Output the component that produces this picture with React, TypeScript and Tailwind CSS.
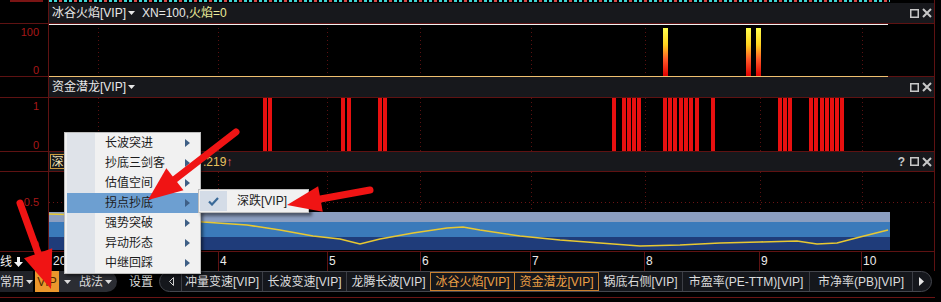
import React from "react";

// grid x positions, local to the chart area (page x - 49)
const GRID = [49, 169, 278, 371, 482, 596, 711, 813];

const FIRE_BARS = [614, 697, 707];

const RED_BARS = [
  263, 268, 341, 347, 378, 383, 612, 622, 627, 632, 637, 663, 668, 673, 679, 684, 689, 695, 711, 778,
  783, 788, 809, 814, 820, 825, 830, 835, 840,
];

const WAVE =
  "0,42 31,43 71,44 111,46 154,50 198,53 231,58 264,64 291,67 311,72 331,67 364,61 398,56 414,55 431,58 471,64 511,68 551,71 591,74 631,73 671,71 711,70 748,69 768,72 788,71 811,65 839,58";

const MENU = ["长波突进", "抄底三剑客", "估值空间", "拐点抄底", "强势突破", "异动形态", "中继回踩"];

const XLABELS = [
  { x: 4, t: "2024" },
  { x: 171, t: "4" },
  { x: 280, t: "5" },
  { x: 373, t: "6" },
  { x: 483, t: "7" },
  { x: 597, t: "8" },
  { x: 712, t: "9" },
  { x: 814, t: "10" },
];

const Caret = ({ color = "#e6e6e6" }: { color?: string }) => (
  <svg width="7" height="4" className="ml-[2px]">
    <path d="M0 0h7L3.5 4z" fill={color} />
  </svg>
);

function WinIcons({ help = false }: { help?: boolean }) {
  return (
    <div className="flex items-center gap-[3px]">
      {help && <span className="mr-[2px] text-[12px] font-bold text-[#c8c8c8]">?</span>}
      <svg width="9" height="9">
        <rect x="0.75" y="0.75" width="7.5" height="7.5" fill="none" stroke="#c8c8c8" strokeWidth="1.5" />
      </svg>
      <svg width="10" height="10">
        <path d="M1 1L9 9M9 1L1 9" stroke="#c8c8c8" strokeWidth="2" />
      </svg>
    </div>
  );
}

function Grid({ h }: { h: number }) {
  return (
    <>
      {GRID.map((x) => (
        <line key={x} x1={x + 0.5} x2={x + 0.5} y1="0" y2={h} stroke="#5a1111" strokeDasharray="1 3" />
      ))}
    </>
  );
}

const Arrow = ({ tail, tip, len, half }: { tail: [number, number]; tip: [number, number]; len: number; half: number }) => {
  const dx = tip[0] - tail[0];
  const dy = tip[1] - tail[1];
  const d = Math.hypot(dx, dy);
  const ux = dx / d;
  const uy = dy / d;
  const bx = tip[0] - ux * len;
  const by = tip[1] - uy * len;
  const px = -uy * half;
  const py = ux * half;
  return (
    <g>
      <line x1={tail[0]} y1={tail[1]} x2={bx} y2={by} stroke="#f01414" strokeWidth="7" strokeLinecap="round" />
      <polygon points={`${tip[0]},${tip[1]} ${bx + px},${by + py} ${bx - px},${by - py}`} fill="#f01414" />
    </g>
  );
};

export default function App() {
  return (
    <div className="relative h-[302px] w-[941px] overflow-hidden bg-black font-['Liberation_Sans','Noto_Sans_CJK_SC',sans-serif] text-[12px] leading-none">
      {/* chart panels */}
      <div className="w-[935px] border-r border-[#5e1212]">
        {/* strip left from the panel above */}
        <div className="flex h-[3px]">
          <div className="w-[49px] shrink-0 border-r border-[#5e1212]">
            <div className="ml-[10px] h-[2px] w-[33px] bg-[#7a1414]" />
          </div>
          <div className="h-[2px] w-[841px] bg-[repeating-linear-gradient(90deg,#3fd4d4_0_3px,transparent_3px_5px,#3fd4d4_5px_8px,transparent_8px_10px,#d64a4a_10px_13px,transparent_13px_15px)]" />
        </div>

        {/* 冰谷火焰 */}
        <div className="flex h-[21px]">
          <div className="w-[49px] shrink-0 border-r border-b border-[#5e1212]" />
          <div className="flex flex-1 items-center justify-between border-b border-[#5e1212] bg-[#17181c] pl-[3px] pr-[2px]">
            <div className="flex items-center text-[#e8e8e8]">
              <span>冰谷火焰[VIP]</span>
              <Caret />
              <span className="ml-[7px]">XN=100,</span>
              <span className="text-[#ecec9a]">火焰=0</span>
            </div>
            <WinIcons />
          </div>
        </div>
        <div className="flex h-[53px]">
          <div className="flex w-[49px] shrink-0 flex-col items-end justify-between border-r border-b border-[#5e1212] pr-[9px] pt-[3px] text-[11px] leading-[11px] text-[#a81818]">
            <span>100</span>
            <span>0</span>
          </div>
          <svg width="885" height="53" className="block">
            <defs>
              <linearGradient id="fire" x1="0" y1="0" x2="0" y2="1">
                <stop offset="0" stopColor="#ffff50" />
                <stop offset="0.35" stopColor="#ffd21e" />
                <stop offset="0.65" stopColor="#ff5a28" />
                <stop offset="1" stopColor="#e00000" />
              </linearGradient>
            </defs>
            <Grid h={53} />
            <line x1="0" x2="839" y1="0.5" y2="0.5" stroke="#f2f2f2" />
            <line x1="0" x2="839" y1="52.5" y2="52.5" stroke="#f0c070" />
            <line x1="839" x2="885" y1="52.5" y2="52.5" stroke="#5e1212" />
            {FIRE_BARS.map((x) => (
              <rect key={x} x={x} y="4" width="5" height="48" fill="url(#fire)" />
            ))}
          </svg>
        </div>

        {/* 资金潜龙 */}
        <div className="flex h-[21px]">
          <div className="w-[49px] shrink-0 border-r border-b border-[#5e1212]" />
          <div className="flex flex-1 items-center justify-between border-b border-[#5e1212] bg-[#17181c] pl-[3px] pr-[2px]">
            <div className="flex items-center text-[#e8e8e8]">
              <span>资金潜龙[VIP]</span>
              <Caret />
            </div>
            <WinIcons />
          </div>
        </div>
        <div className="flex h-[54px] border-b border-[#5e1212]">
          <div className="flex w-[49px] shrink-0 flex-col items-end justify-between border-r border-[#5e1212] pr-[9px] pt-[3px] text-[11px] leading-[11px] text-[#a81818]">
            <span>1</span>
            <span>0</span>
          </div>
          <svg width="885" height="53" className="block">
            <Grid h={53} />
            {RED_BARS.map((x) => (
              <rect key={x} x={x - 49} y="0" width="4" height="53" fill="#e81010" />
            ))}
          </svg>
        </div>

        {/* 深跌 */}
        <div className="flex h-[20px]">
          <div className="w-[49px] shrink-0 border-r border-b border-[#5e1212]" />
          <div className="flex flex-1 items-center justify-between border-b border-[#5e1212] bg-[#17181c] pl-[1px] pr-[2px]">
            <div className="flex items-center">
              <span className="flex h-[15px] w-[15px] items-center justify-center border border-[#c99a3c] text-[#f2e6b8]">深</span>
              <span className="ml-[138px] text-[#e8c25e]">.219</span>
              <span className="text-[#e46070]">↑</span>
            </div>
            <WinIcons help />
          </div>
        </div>
        <div className="flex h-[80px] border-b border-[#5e1212]">
          <div className="flex w-[49px] shrink-0 flex-col items-end justify-between border-r border-[#5e1212] pr-[9px] pt-[25px] text-[11px] leading-[11px] text-[#a81818]">
            <span>0.5</span>
            <span>0</span>
          </div>
          <svg width="885" height="79" className="block">
            <Grid h={40} />
            <line x1="0" x2="885" y1="30.5" y2="30.5" stroke="#6a1414" strokeDasharray="1 3" />
            <rect x="0" y="40" width="841" height="10" fill="#8b9ec0" />
            <rect x="0" y="50" width="841" height="15" fill="#3b7aba" />
            <rect x="0" y="65" width="841" height="13" fill="#1f3c7a" />
            <polyline points={WAVE} fill="none" stroke="#e8c832" strokeWidth="1.6" />
          </svg>
        </div>

        {/* x axis */}
        <div className="flex h-[19px]">
          <div className="flex w-[49px] shrink-0 items-center border-r border-[#5e1212] text-[#f0f0f0]">
            <span>线</span>
            <svg width="9" height="10" className="ml-[2px]">
              <path d="M3 0h3v5h3L4.5 10 0 5h3z" fill="#f4f4f4" />
            </svg>
          </div>
          <svg width="885" height="19" className="block">
            {XLABELS.map((l) => (
              <g key={l.t}>
                <line x1={l.x - 1.5} x2={l.x - 1.5} y1="0" y2="19" stroke="#5e1212" />
                <text x={l.x} y="13" fill="#ececec" fontSize="12">
                  {l.t}
                </text>
              </g>
            ))}
          </svg>
        </div>
      </div>

      {/* tab bar */}
      <div className="flex h-[21px] items-center text-[#dcdcdc]">
        <div className="flex h-full w-[33px] items-center overflow-hidden bg-[#202228]">
          <span className="shrink-0">常用</span>
          <Caret color="#dcdcdc" />
        </div>
        <div className="ml-[2px] flex h-full w-[24px] items-center justify-center bg-[#eb972c] text-[#4a2800]">VIP</div>
        <div className="flex h-full w-[58px] items-center rounded-r-full bg-[#2b2d33] pl-[3px]">
          <Caret color="#dcdcdc" />
          <span className="ml-[8px]">战法</span>
          <Caret color="#dcdcdc" />
        </div>
        <span className="ml-[12px]">设置</span>
        <div className="ml-[6px] flex h-[21px] w-[773px] overflow-hidden rounded-full border border-[#44464d] bg-[#15171c]">
          <div className="flex w-[21px] items-center justify-center pl-[2px]">
            <svg width="5" height="9">
              <path d="M4.5 0.5v8L0.5 4.5z" fill="none" stroke="#cfcfcf" />
            </svg>
          </div>
          <div className="flex w-[81px] items-center justify-center border-l border-[#3c3e45]">冲量变速[VIP]</div>
          <div className="flex w-[84px] items-center justify-center border-l border-[#3c3e45]">长波变速[VIP]</div>
          <div className="flex w-[84px] items-center justify-center border-l border-[#3c3e45]">龙腾长波[VIP]</div>
          <div className="flex w-[85px] items-center justify-center border border-[#c9802e] text-[#eda045]">冰谷火焰[VIP]</div>
          <div className="flex w-[84px] items-center justify-center border-y border-r border-[#c9802e] text-[#eda045]">资金潜龙[VIP]</div>
          <div className="flex w-[83px] items-center justify-center">锅底右侧[VIP]</div>
          <div className="flex w-[127px] items-center justify-center border-l border-[#3c3e45]">市盈率(PE-TTM)[VIP]</div>
          <div className="flex w-[103px] items-center justify-center border-l border-[#3c3e45]">市净率(PB)[VIP]</div>
          <div className="flex w-[19px] items-center justify-start border-l border-[#3c3e45] pl-[6px]">
            <svg width="5" height="9">
              <path d="M0 0v9L5 4.5z" fill="#e6e6e6" />
            </svg>
          </div>
        </div>
      </div>

      {/* bottom strip */}
      <div className="h-[10px] pt-[5px]">
        <div className="h-px w-[935px] bg-[#6a1414]" />
      </div>

      {/* VIP menu */}
      <div className="absolute left-[64px] top-[132px] w-[137px] border border-[#bdbdbd] bg-[#f1f1f1] px-[2px] text-[#1c1c1c] shadow-[2px_2px_3px_rgba(0,0,0,0.5)]">
        {MENU.map((m, i) => (
          <div key={m} className={i === 3 ? "flex h-[20px] items-center bg-[#6d9fd1]" : "flex h-[20px] items-center"}>
            <div className={i === 3 ? "h-full w-[28px]" : "h-full w-[28px] bg-[#dfe3e9]"} />
            <span className="ml-[10px] flex-1">{m}</span>
            <svg width="5" height="8" className="mr-[8px]">
              <path d="M0 0L5 4L0 8z" fill="#3e5f86" />
            </svg>
          </div>
        ))}
      </div>

      {/* submenu */}
      <div className="absolute left-[198px] top-[189px] w-[111px] border border-[#bdbdbd] bg-[#f1f1f1] p-[1px] text-[#1c1c1c] shadow-[3px_3px_3px_rgba(0,0,0,0.45)]">
        <div className="flex h-[20px] items-center">
          <div className="flex h-full w-[27px] items-center justify-center bg-[#d4dce7]">
            <svg width="11" height="9">
              <path d="M1 4.5L4 7.5L10 1" fill="none" stroke="#3a6a98" strokeWidth="2.2" />
            </svg>
          </div>
          <span className="ml-[10px]">深跌[VIP]</span>
        </div>
      </div>

      {/* annotation arrows */}
      <svg width="941" height="302" className="pointer-events-none absolute left-0 top-0">
        <Arrow tail={[236, 132]} tip={[148, 200]} len={34} half={14} />
        <Arrow tail={[370, 190]} tip={[287, 205]} len={34} half={13} />
        <Arrow tail={[20, 203]} tip={[51, 289]} len={38} half={15} />
      </svg>
    </div>
  );
}
